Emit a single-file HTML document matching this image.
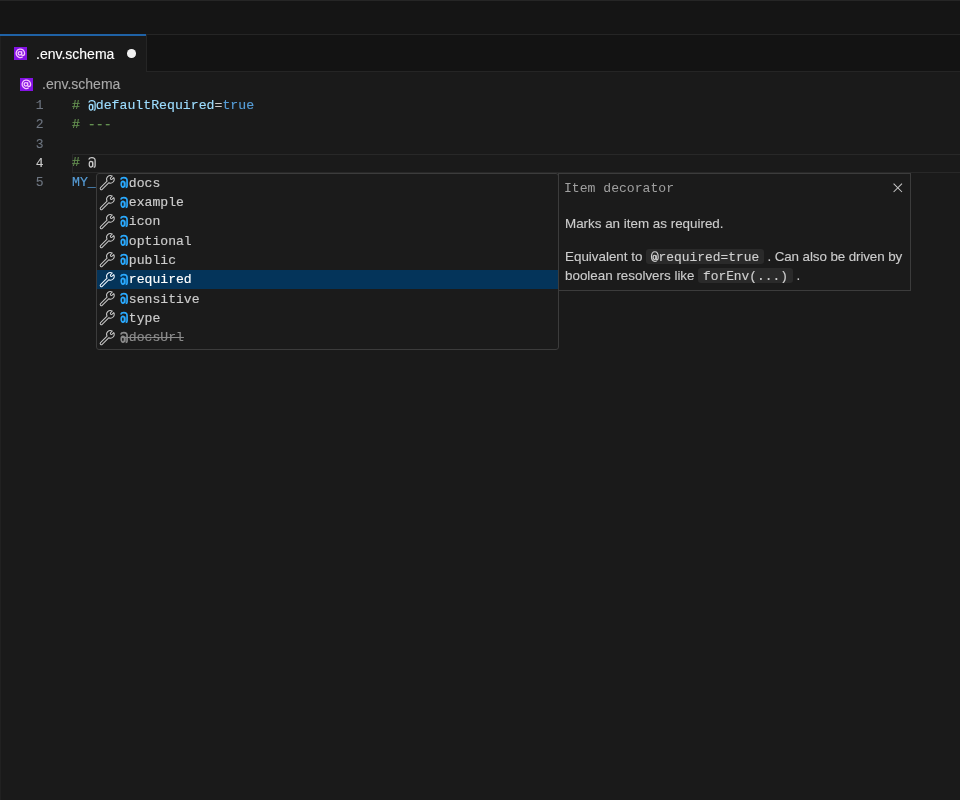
<!DOCTYPE html>
<html><head><meta charset="utf-8">
<style>
*{margin:0;padding:0;box-sizing:border-box}
html,body{width:960px;height:800px;overflow:hidden;background:#1a1a1a;font-family:"Liberation Sans",sans-serif}
.abs{position:absolute;will-change:transform}
#top{left:0;top:0;width:960px;height:34px;background:#151515;border-top:1px solid #262626}
#tabbar{left:0;top:34px;width:960px;height:38px;background:#131313;border-top:1px solid #252525;border-bottom:1px solid #252525}
#tab{left:0;top:34px;width:147px;height:38px;background:#1a1a1a;border-right:1px solid #252525;border-left:1px solid #222222}
#tabline{left:0;top:34px;width:146px;height:2px;background:#1f62a6}
.ficon{width:13px;height:13px;background:#8412e4;}
.ficon svg{display:block}
#tabicon{left:14px;top:47px}
#tablabel{left:36px;top:45.7px;-webkit-text-stroke:0.12px currentColor;font-size:14px;color:#ffffff;white-space:nowrap}
#dot{left:126.6px;top:48.9px;width:8.7px;height:8.7px;border-radius:50%;background:#f2f2f2}
#bcicon{left:20px;top:77.5px}
#bclabel{left:42px;top:76.4px;-webkit-text-stroke:0.12px currentColor;font-size:14px;color:#a9a9a9;white-space:nowrap}
.mono{font-family:"Liberation Mono",monospace;-webkit-text-stroke:0.15px currentColor}
.ln{position:absolute;will-change:transform;margin-top:-0.6px;left:0;width:43.5px;text-align:right;font-size:13px;-webkit-text-stroke:0.1px currentColor !important;color:#6e7681;line-height:19.3px}
.code{position:absolute;will-change:transform;margin-top:-1.2px;left:72px;font-size:13.2px;line-height:19.3px;white-space:pre;color:#cccccc}
.cm{color:#6a9955}
.at{color:#9cdcfe}
.kw{color:#569cd6}
#curline{left:71.8px;top:153.8px;width:889px;height:18.5px;border:1px solid #282828}
#suggest{left:95.5px;top:172.9px;width:463px;height:176.8px;background:#1b1b1b;border:1px solid #3c3c3c;border-radius:3px}
.row{position:absolute;left:0;width:461px;height:19.3px}
.row.sel{background:#04345a}
.row.sel>svg path{stroke:#eef6ff}
.row>svg{position:absolute;left:2.4px;top:1.5px;overflow:visible}
.row .t{position:absolute;left:24px;top:0;font-size:13.1px;line-height:19.3px;color:#cccccc;white-space:pre}
.row .h{color:#2aaaff;font-weight:bold}
.row.sel .t{color:#ffffff}
.row.dep .t{color:#8b8b8b;text-decoration:line-through}
.row.dep .h{color:#8b8b8b}
#details{left:558px;top:172.9px;width:353px;height:118px;background:#1b1b1b;border:1px solid #3c3c3c}
#dtitle{left:4.6px;top:6.5px;font-size:13.1px;color:#a0a0a0;-webkit-text-stroke:0;white-space:pre}
#dclose{left:333.8px;top:9.0px}
.dp{position:absolute;left:6px;-webkit-text-stroke:0.12px currentColor;font-size:13.4px;line-height:18.2px;color:#cccccc;white-space:nowrap}
.code2{display:inline-block;box-sizing:border-box;height:15.3px;padding:3.6px 4.7px 0;line-height:12.1px;font-family:"Liberation Mono",monospace;background:#2a2a2a;border-radius:3px;color:#d0d0d0;font-size:12.9px;vertical-align:baseline}
.atg{display:inline-block;vertical-align:-1.6px;overflow:visible;fill:none;stroke:currentColor;stroke-width:1.25}
.atg.b{stroke-width:1.7;position:relative;left:-0.7px}
.atg.s{vertical-align:top;position:relative;top:-0.8px}
</style></head><body>
<div id="top" class="abs"></div>
<div id="tabbar" class="abs"></div>
<div id="tab" class="abs"></div>
<div id="tabline" class="abs"></div>
<div class="abs" style="left:0;top:36px;width:1px;height:764px;background:#212121"></div>
<div id="tabicon" class="abs ficon"><svg width="13" height="13" viewBox="0 0 13 13"><g fill="none" stroke="#f6c4ff" stroke-width="1.3"><circle cx="5.9" cy="6.3" r="1.75"/><path d="M7.65 4.3V7.4Q7.65 8.5 8.75 8.5Q10.6 8.5 10.6 6.3A4.25 4.25 0 1 0 8.6 9.9"/></g></svg></div>
<div id="tablabel" class="abs">.env.schema</div>
<div id="dot" class="abs"></div>
<div id="bcicon" class="abs ficon"><svg width="13" height="13" viewBox="0 0 13 13"><g fill="none" stroke="#f6c4ff" stroke-width="1.3"><circle cx="5.9" cy="6.3" r="1.75"/><path d="M7.65 4.3V7.4Q7.65 8.5 8.75 8.5Q10.6 8.5 10.6 6.3A4.25 4.25 0 1 0 8.6 9.9"/></g></svg></div>
<div id="bclabel" class="abs">.env.schema</div>

<div id="curline" class="abs"></div>
<div class="ln mono" style="top:96.7px">1</div>
<div class="ln mono" style="top:116px">2</div>
<div class="ln mono" style="top:135.3px">3</div>
<div class="ln mono" style="top:154.6px;color:#cccccc">4</div>
<div class="ln mono" style="top:173.9px">5</div>
<div class="code mono" style="top:96.7px"><span class="cm"># </span><span class="at"><svg class="atg" width="7.93" height="11" viewBox="0 0 8 11"><path d="M0.7 2.5Q1.4 0.6 3.9 0.6Q7.2 0.6 7.2 3.6V9Q7.2 10.4 5.8 10.4"/><ellipse cx="3.0" cy="7.3" rx="1.75" ry="2.9"/><path d="M4.75 4.6V10"/></svg>defaultRequired</span>=<span class="kw">true</span></div>
<div class="code mono" style="top:116px"><span class="cm"># ---</span></div>
<div class="code mono" style="top:154.6px"><span class="cm"># </span><svg class="atg" width="7.93" height="11" viewBox="0 0 8 11"><path d="M0.7 2.5Q1.4 0.6 3.9 0.6Q7.2 0.6 7.2 3.6V9Q7.2 10.4 5.8 10.4"/><ellipse cx="3.0" cy="7.3" rx="1.75" ry="2.9"/><path d="M4.75 4.6V10"/></svg></div>
<div class="code mono" style="top:173.9px"><span class="kw">MY_</span></div>

<div id="suggest" class="abs">
  <div class="row" style="top:-0.30px"><svg width="15.2" height="15.2" viewBox="0 0 16 16"><path d="M1.65 13.35L8.49 6.51A4 4 0 0 1 13.9 1.08L12.25 2.73A1.15 1.15 0 0 0 13.87 4.35L15.52 2.7A4 4 0 0 1 10.22 8.18L3.35 15.05A1.2 1.2 0 0 1 1.65 13.35Z" fill="none" stroke="#c5c5c5" stroke-width="1.1" stroke-linejoin="round"/></svg><div class="t mono"><span class="h"><svg class="atg b" width="7.86" height="11" viewBox="0 0 8 11"><path d="M0.7 2.5Q1.4 0.6 3.9 0.6Q7.2 0.6 7.2 3.6V9Q7.2 10.4 5.8 10.4"/><ellipse cx="3.0" cy="7.3" rx="1.75" ry="2.9"/><path d="M4.75 4.6V10"/></svg></span>docs</div></div>
  <div class="row" style="top:19.00px"><svg width="15.2" height="15.2" viewBox="0 0 16 16"><path d="M1.65 13.35L8.49 6.51A4 4 0 0 1 13.9 1.08L12.25 2.73A1.15 1.15 0 0 0 13.87 4.35L15.52 2.7A4 4 0 0 1 10.22 8.18L3.35 15.05A1.2 1.2 0 0 1 1.65 13.35Z" fill="none" stroke="#c5c5c5" stroke-width="1.1" stroke-linejoin="round"/></svg><div class="t mono"><span class="h"><svg class="atg b" width="7.86" height="11" viewBox="0 0 8 11"><path d="M0.7 2.5Q1.4 0.6 3.9 0.6Q7.2 0.6 7.2 3.6V9Q7.2 10.4 5.8 10.4"/><ellipse cx="3.0" cy="7.3" rx="1.75" ry="2.9"/><path d="M4.75 4.6V10"/></svg></span>example</div></div>
  <div class="row" style="top:38.30px"><svg width="15.2" height="15.2" viewBox="0 0 16 16"><path d="M1.65 13.35L8.49 6.51A4 4 0 0 1 13.9 1.08L12.25 2.73A1.15 1.15 0 0 0 13.87 4.35L15.52 2.7A4 4 0 0 1 10.22 8.18L3.35 15.05A1.2 1.2 0 0 1 1.65 13.35Z" fill="none" stroke="#c5c5c5" stroke-width="1.1" stroke-linejoin="round"/></svg><div class="t mono"><span class="h"><svg class="atg b" width="7.86" height="11" viewBox="0 0 8 11"><path d="M0.7 2.5Q1.4 0.6 3.9 0.6Q7.2 0.6 7.2 3.6V9Q7.2 10.4 5.8 10.4"/><ellipse cx="3.0" cy="7.3" rx="1.75" ry="2.9"/><path d="M4.75 4.6V10"/></svg></span>icon</div></div>
  <div class="row" style="top:57.60px"><svg width="15.2" height="15.2" viewBox="0 0 16 16"><path d="M1.65 13.35L8.49 6.51A4 4 0 0 1 13.9 1.08L12.25 2.73A1.15 1.15 0 0 0 13.87 4.35L15.52 2.7A4 4 0 0 1 10.22 8.18L3.35 15.05A1.2 1.2 0 0 1 1.65 13.35Z" fill="none" stroke="#c5c5c5" stroke-width="1.1" stroke-linejoin="round"/></svg><div class="t mono"><span class="h"><svg class="atg b" width="7.86" height="11" viewBox="0 0 8 11"><path d="M0.7 2.5Q1.4 0.6 3.9 0.6Q7.2 0.6 7.2 3.6V9Q7.2 10.4 5.8 10.4"/><ellipse cx="3.0" cy="7.3" rx="1.75" ry="2.9"/><path d="M4.75 4.6V10"/></svg></span>optional</div></div>
  <div class="row" style="top:76.90px"><svg width="15.2" height="15.2" viewBox="0 0 16 16"><path d="M1.65 13.35L8.49 6.51A4 4 0 0 1 13.9 1.08L12.25 2.73A1.15 1.15 0 0 0 13.87 4.35L15.52 2.7A4 4 0 0 1 10.22 8.18L3.35 15.05A1.2 1.2 0 0 1 1.65 13.35Z" fill="none" stroke="#c5c5c5" stroke-width="1.1" stroke-linejoin="round"/></svg><div class="t mono"><span class="h"><svg class="atg b" width="7.86" height="11" viewBox="0 0 8 11"><path d="M0.7 2.5Q1.4 0.6 3.9 0.6Q7.2 0.6 7.2 3.6V9Q7.2 10.4 5.8 10.4"/><ellipse cx="3.0" cy="7.3" rx="1.75" ry="2.9"/><path d="M4.75 4.6V10"/></svg></span>public</div></div>
  <div class="row sel" style="top:96.20px"><svg width="15.2" height="15.2" viewBox="0 0 16 16"><path d="M1.65 13.35L8.49 6.51A4 4 0 0 1 13.9 1.08L12.25 2.73A1.15 1.15 0 0 0 13.87 4.35L15.52 2.7A4 4 0 0 1 10.22 8.18L3.35 15.05A1.2 1.2 0 0 1 1.65 13.35Z" fill="none" stroke="#c5c5c5" stroke-width="1.1" stroke-linejoin="round"/></svg><div class="t mono"><span class="h"><svg class="atg b" width="7.86" height="11" viewBox="0 0 8 11"><path d="M0.7 2.5Q1.4 0.6 3.9 0.6Q7.2 0.6 7.2 3.6V9Q7.2 10.4 5.8 10.4"/><ellipse cx="3.0" cy="7.3" rx="1.75" ry="2.9"/><path d="M4.75 4.6V10"/></svg></span>required</div></div>
  <div class="row" style="top:115.50px"><svg width="15.2" height="15.2" viewBox="0 0 16 16"><path d="M1.65 13.35L8.49 6.51A4 4 0 0 1 13.9 1.08L12.25 2.73A1.15 1.15 0 0 0 13.87 4.35L15.52 2.7A4 4 0 0 1 10.22 8.18L3.35 15.05A1.2 1.2 0 0 1 1.65 13.35Z" fill="none" stroke="#c5c5c5" stroke-width="1.1" stroke-linejoin="round"/></svg><div class="t mono"><span class="h"><svg class="atg b" width="7.86" height="11" viewBox="0 0 8 11"><path d="M0.7 2.5Q1.4 0.6 3.9 0.6Q7.2 0.6 7.2 3.6V9Q7.2 10.4 5.8 10.4"/><ellipse cx="3.0" cy="7.3" rx="1.75" ry="2.9"/><path d="M4.75 4.6V10"/></svg></span>sensitive</div></div>
  <div class="row" style="top:134.80px"><svg width="15.2" height="15.2" viewBox="0 0 16 16"><path d="M1.65 13.35L8.49 6.51A4 4 0 0 1 13.9 1.08L12.25 2.73A1.15 1.15 0 0 0 13.87 4.35L15.52 2.7A4 4 0 0 1 10.22 8.18L3.35 15.05A1.2 1.2 0 0 1 1.65 13.35Z" fill="none" stroke="#c5c5c5" stroke-width="1.1" stroke-linejoin="round"/></svg><div class="t mono"><span class="h"><svg class="atg b" width="7.86" height="11" viewBox="0 0 8 11"><path d="M0.7 2.5Q1.4 0.6 3.9 0.6Q7.2 0.6 7.2 3.6V9Q7.2 10.4 5.8 10.4"/><ellipse cx="3.0" cy="7.3" rx="1.75" ry="2.9"/><path d="M4.75 4.6V10"/></svg></span>type</div></div>
  <div class="row dep" style="top:154.10px"><svg width="15.2" height="15.2" viewBox="0 0 16 16"><path d="M1.65 13.35L8.49 6.51A4 4 0 0 1 13.9 1.08L12.25 2.73A1.15 1.15 0 0 0 13.87 4.35L15.52 2.7A4 4 0 0 1 10.22 8.18L3.35 15.05A1.2 1.2 0 0 1 1.65 13.35Z" fill="none" stroke="#c5c5c5" stroke-width="1.1" stroke-linejoin="round"/></svg><div class="t mono"><span class="h"><svg class="atg b" width="7.86" height="11" viewBox="0 0 8 11"><path d="M0.7 2.5Q1.4 0.6 3.9 0.6Q7.2 0.6 7.2 3.6V9Q7.2 10.4 5.8 10.4"/><ellipse cx="3.0" cy="7.3" rx="1.75" ry="2.9"/><path d="M4.75 4.6V10"/></svg></span>docsUrl</div><div style="position:absolute;left:24px;top:9px;width:8px;height:1px;background:#8b8b8b"></div></div>
</div>
<div id="details" class="abs">
  <div id="dtitle" class="abs mono">Item decorator</div>
  <svg id="dclose" class="abs" width="10" height="10" viewBox="0 0 10 10"><path d="M0.6 0.6L9.0 9.0M9.0 0.6L0.6 9.0" stroke="#c8c8c8" stroke-width="1.05"/></svg>
  <div class="dp" style="top:41.4px">Marks an item as required.</div>
  <div class="dp" style="top:74.1px">Equivalent to <span class="code2"><svg class="atg s" width="7.74" height="11" viewBox="0 0 8 11"><ellipse cx="3.7" cy="6.4" rx="1.55" ry="2.2"/><path d="M5.3 4.2V7.7Q5.3 8.9 6.3 8.9Q7.45 8.9 7.45 6Q7.45 0.6 4 0.6Q0.55 0.6 0.55 5.8Q0.55 10.5 4.1 10.5Q5.1 10.5 5.9 10.1"/></svg>required=true</span><span style="letter-spacing:-0.1px"> . Can also be driven by</span></div>
  <div class="dp" style="top:93.3px">boolean resolvers like <span class="code2">forEnv(...)</span> .</div>
</div>
</body></html>
